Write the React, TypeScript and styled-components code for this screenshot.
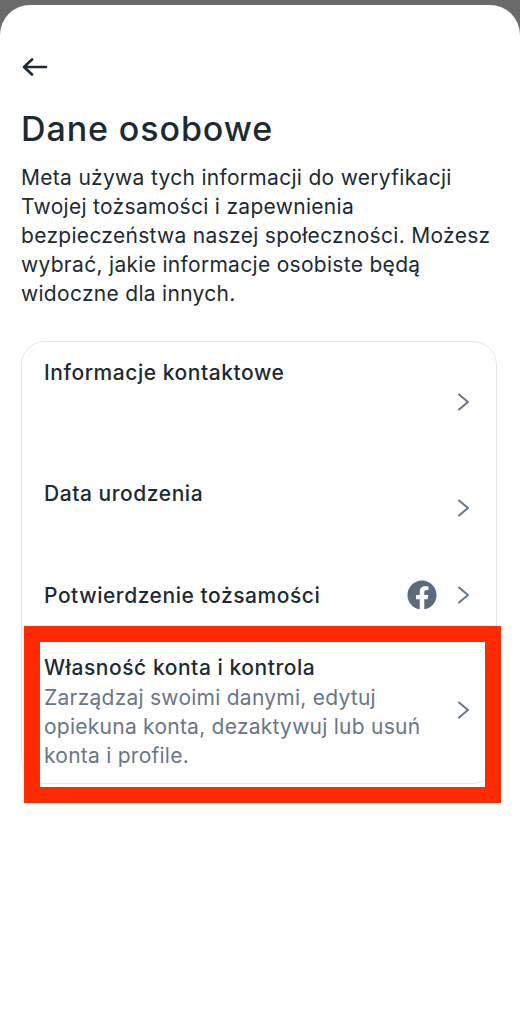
import React from 'react';
import styled, { createGlobalStyle } from 'styled-components';
import { FaFacebook } from 'react-icons/fa';

const GlobalStyle = createGlobalStyle`
  html, body {
    margin: 0;
    padding: 0;
    background: #6b6b6b;
  }
  * {
    box-sizing: border-box;
  }
`;

const Sheet = styled.div`
  width: 520px;
  height: 1019px;
  margin-top: 5px;
  padding: 53px 23px 0 21px;
  background: #fff;
  border-radius: 30px 30px 0 0;
  font-family: Inter, 'Liberation Sans', sans-serif;
  color: #1c2b33;
  overflow: hidden;
`;

const BackButton = styled.div`
  width: 26px;
  height: 18px;
  margin-left: 1px;
  display: flex;
`;

const Title = styled.h1`
  margin: 33px 0 0;
  font-size: 34px;
  line-height: 40px;
  font-weight: 550;
  letter-spacing: 0.9px;
  color: #1c2b33;
`;

const Intro = styled.p`
  margin: 14px 0 0;
  font-size: 21px;
  line-height: 29px;
  font-weight: 400;
  letter-spacing: 0.3px;
  color: #1c2b33;
  white-space: pre-line;
`;

const Card = styled.div`
  position: relative;
  width: 476px;
  height: 443px;
  margin-top: 33px;
  border: 1.5px solid #e4e6e9;
  border-radius: 24px;
`;

const Row = styled.div<{ $height: number; $centered?: boolean; $top?: number }>`
  height: ${p => p.$height}px;
  padding: ${p => (p.$centered ? 0 : p.$top ?? 16)}px 24px 0 22px;
  display: flex;
  align-items: ${p => (p.$centered ? 'center' : 'flex-start')};
  justify-content: space-between;
  position: relative;
`;

const RowText = styled.div`
  display: flex;
  flex-direction: column;
`;

const RowTitle = styled.div`
  font-size: 21px;
  line-height: 29px;
  font-weight: 500;
  letter-spacing: 0.55px;
  color: #1c2b33;
`;

const RowDescription = styled.div`
  margin-top: 1px;
  font-size: 21px;
  line-height: 29px;
  font-weight: 400;
  letter-spacing: 0.25px;
  color: #677788;
  white-space: pre-line;
`;

const RowEnd = styled.div<{ $floating?: boolean }>`
  display: flex;
  align-items: center;
  gap: 20px;
  ${p =>
    p.$floating
      ? `
    position: absolute;
    right: 26px;
    top: 0;
    bottom: 0;
  `
      : 'margin-right: 2px;'}
`;

const Highlight = styled.div`
  position: absolute;
  left: 1.5px;
  top: 283.5px;
  width: 477px;
  height: 177px;
  border: 16px solid #ff2a00;
  pointer-events: none;
`;

const BackArrow = () => (
  <svg width="26" height="18" viewBox="0 0 26 18" fill="none">
    <path
      d="M24 9H2M10 1.5L2 9l8 7.5"
      stroke="#1c2b33"
      strokeWidth="2.6"
      strokeLinecap="round"
      strokeLinejoin="round"
    />
  </svg>
);

const Chevron = () => (
  <svg width="13" height="18" viewBox="0 0 13 18" fill="none">
    <path
      d="M2 1.5L11 9l-9 7.5"
      stroke="#677788"
      strokeWidth="2"
      strokeLinecap="round"
      strokeLinejoin="round"
    />
  </svg>
);

export default function App() {
  return (
    <>
      <GlobalStyle />
      <Sheet>
        <BackButton>
          <BackArrow />
        </BackButton>
        <Title>Dane osobowe</Title>
        <Intro>
          {
            'Meta używa tych informacji do weryfikacji\nTwojej tożsamości i zapewnienia\nbezpieczeństwa naszej społeczności. Możesz\nwybrać, jakie informacje osobiste będą\nwidoczne dla innych.'
          }
        </Intro>
        <Card>
          <Row $height={119} $top={16}>
            <RowTitle>Informacje kontaktowe</RowTitle>
            <RowEnd $floating>
              <Chevron />
            </RowEnd>
          </Row>
          <Row $height={94} $top={18}>
            <RowTitle>Data urodzenia</RowTitle>
            <RowEnd $floating>
              <Chevron />
            </RowEnd>
          </Row>
          <Row $height={80} $centered>
            <RowTitle>Potwierdzenie tożsamości</RowTitle>
            <RowEnd>
              <FaFacebook size={30} color="#5a6b80" />
              <Chevron />
            </RowEnd>
          </Row>
          <Row $height={150} $top={18}>
            <RowText>
              <RowTitle>Własność konta i kontrola</RowTitle>
              <RowDescription>
                {'Zarządzaj swoimi danymi, edytuj\nopiekuna konta, dezaktywuj lub usuń\nkonta i profile.'}
              </RowDescription>
            </RowText>
            <RowEnd $floating>
              <Chevron />
            </RowEnd>
          </Row>
          <Highlight />
        </Card>
      </Sheet>
    </>
  );
}
